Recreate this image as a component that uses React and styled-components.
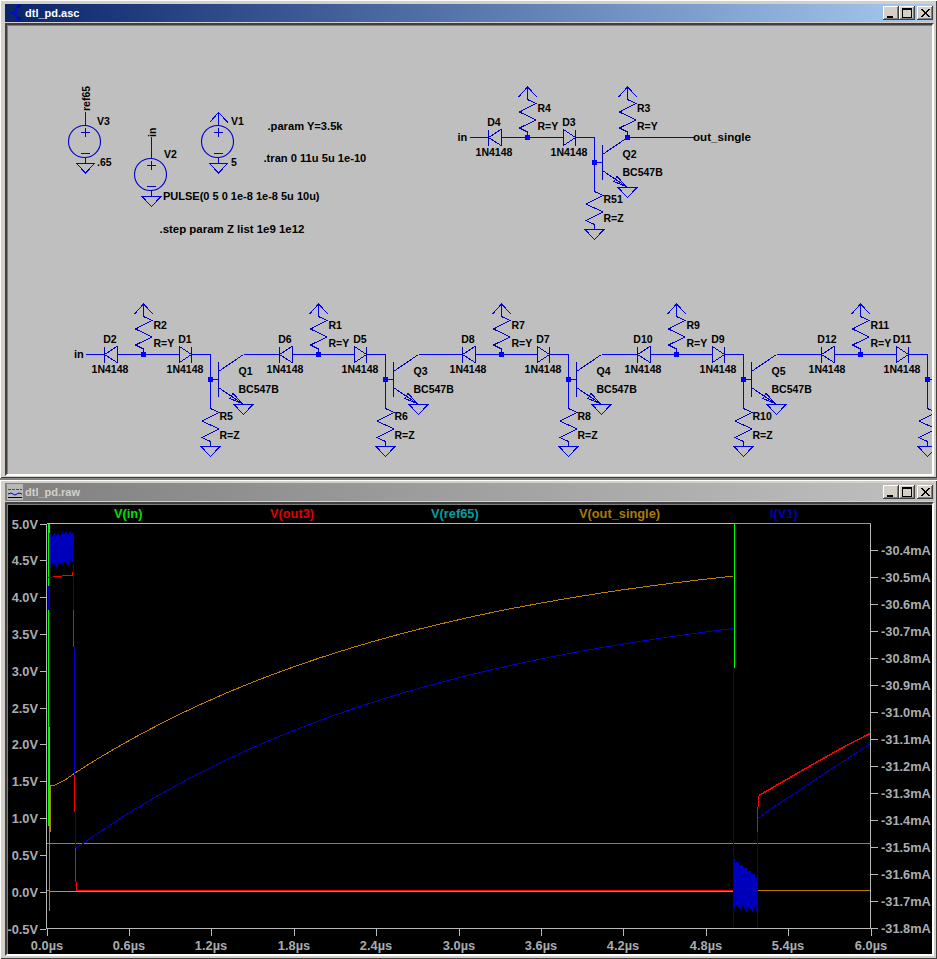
import React from 'react';
import styled, { createGlobalStyle } from 'styled-components';

const Global = createGlobalStyle`
  html, body { margin: 0; padding: 0; background: #808080; }
  #root { width: 937px; height: 959px; overflow: hidden; }
`;

const Desktop = styled.div`
  width: 937px;
  height: 959px;
  display: flex;
  flex-direction: column;
  gap: 2px;
  background: #808080;
`;

const Window = styled.section`
  box-sizing: border-box;
  width: 937px;
  padding: ${p => p.$top}px 3px ${p => p.$bottom}px 5px;
  display: flex;
  flex-direction: column;
  gap: 1px;
  background: #d4d0c8;
  box-shadow: inset 1px 1px 0 #ffffff, inset -1px -1px 0 #404040;
`;

const TitleBar = styled.header`
  height: 18px;
  display: flex;
  align-items: center;
  padding: 0 1px 0 2px;
  background: linear-gradient(90deg, ${p => (p.$active ? '#0a246a, #a6caf0' : '#808080, #c0c0c0')});
`;

const TitleText = styled.h1`
  margin: 0;
  flex: 1;
  font: bold 11px "Liberation Sans", Arial, sans-serif;
  color: ${p => (p.$active ? '#ffffff' : '#d4d0c8')};
`;

const CaptionButton = styled.button`
  width: 16px;
  height: 14px;
  margin-left: ${p => p.$gap || 0}px;
  padding: 0;
  border: 0;
  display: flex;
  background: #d4d0c8;
  box-shadow: inset -1px -1px 0 #404040, inset 1px 1px 0 #ffffff, inset -2px -2px 0 #808080;
`;

const Sunken = styled.div`
  display: block;
  height: ${p => p.$h}px;
  border: 2px solid;
  border-color: #404040 #ffffff #ffffff #404040;
  box-shadow: inset 1px 1px 0 #808080;
  background: ${p => p.$bg};
`;

const Drawing = styled.svg`
  display: block;
  width: 925px;
  height: ${p => p.$h}px;
  shape-rendering: crispEdges;
`;

const Part = styled.text`
  font: bold 10.5px "Liberation Sans", Arial, sans-serif;
  fill: #000000;
`;

const Note = styled(Part)`
  font-size: ${p => p.$size || 11}px;
`;

const AxisText = styled.text`
  font: bold 12.8px "Liberation Sans", Arial, sans-serif;
  fill: ${p => p.$c || '#a9adb0'};
`;

const Wire = styled.path`
  fill: none;
  stroke: #0000ff;
  stroke-width: 1;
`;

const Sym = styled.path`
  fill: none;
  stroke: #0000c8;
  stroke-width: 1;
`;

const Power = styled.path`
  fill: none;
  stroke: #0000f0;
  stroke-width: 1;
`;

const Ring = styled.circle`
  fill: none;
  stroke: #0000c8;
  stroke-width: 1.1;
  shape-rendering: auto;
`;

const Node = styled.rect`
  fill: #0000ff;
  width: 5px;
  height: 5px;
`;

const Trace = styled.path`
  fill: none;
  stroke: ${p => p.$c};
  stroke-width: ${p => p.$w || 1};
`;

const Axis = styled.path`
  fill: none;
  stroke: #b8b8b8;
  stroke-width: 1;
`;

const Ground = ({ x, y }) => <Power d={`M${x - 9.5} ${y}H${x + 9.5}L${x} ${y + 10}Z`} />;
const Arrow = ({ x, y }) => <Power d={`M${x - 9} ${y + 10}L${x} ${y}L${x + 9.5} ${y + 10}M${x} ${y}V${y + 13}`} />;

const PullUp = ({ x, bottom = 354.5 }) => (
  <>
    <Arrow x={x} y={304} />
    <Sym d={`M${x} 316.5L${x + 8.5} 320.5L${x - 8} 329L${x + 8.5} 337L${x - 8} 345L${x} 349V${bottom}`} />
  </>
);

const DiodeLeft = ({ x }) => <Sym d={`M${x} 346.5V362.5M${x} 354.5L${x + 12.5} 346.5V362.5Z`} />;
const DiodeRight = ({ x }) => <Sym d={`M${x + 12} 346.5V362.5M${x + 12} 354.5L${x} 346.5V362.5Z`} />;

const Center = styled(Part)`
  text-anchor: middle;
`;

const Stage = ({ dx, dy = 0, d1, d2, r1, r2, q, input, collectorTo }) => (
  <g transform={`translate(${dx} ${dy})`}>
    {input && <Wire d="M85.5 354.5H104.5" />}
    <Wire d="M117.5 354.5H179.5M191.5 354.5H210.5V408.5M210.5 379.5H218.5" />
    <DiodeLeft x={104.5} />
    <DiodeRight x={179.5} />
    <PullUp x={143.5} />
    <Node x={141} y={352} />
    <Node x={208} y={377} />
    <Sym d="M218.5 362V397M218.5 371.5L243.5 354.5M218.5 387.5L243.5 404.5M243 404L233 393.5L230 398.5L243 404" />
    {collectorTo && <Wire d={`M243.5 354.5H${collectorTo}`} />}
    <Ground x={243.5} y={404.5} />
    <Sym d="M210.5 408.5L219 412.5L202 421L219 429L202 437.5L210.5 441.5V446" />
    <Ground x={210.5} y={446.5} />
    <Center x={110} y={343}>{d1}</Center>
    <Center x={110} y={373}>1N4148</Center>
    <Center x={185} y={343}>{d2}</Center>
    <Center x={185} y={373}>1N4148</Center>
    <Part x={153.5} y={329}>{r1}</Part>
    <Part x={153.5} y={347}>R=Y</Part>
    {q && (
      <>
        <Part x={219.5} y={420}>{r2}</Part>
        <Part x={219.5} y={439}>R=Z</Part>
        <Part x={238.5} y={375}>{q}</Part>
        <Part x={238.5} y={393}>BC547B</Part>
      </>
    )}
  </g>
);

const Source = ({ x, cy, gnd }) => (
  <>
    <Ring cx={x - 1} cy={cy} r={16} />
    <Sym d={`M${x - 4.5} ${cy - 9.5}H${x + 4.5}M${x} ${cy - 13.5}V${cy - 5}M${x - 4.5} ${cy + 11.5}H${x + 4.5}M${x} ${cy + 16}V${gnd}`} />
    <Ground x={x} y={gnd} />
  </>
);

const stages = [
  { dx: 0, d1: 'D2', d2: 'D1', r1: 'R2', r2: 'R5', q: 'Q1', input: true },
  { dx: 175, d1: 'D6', d2: 'D5', r1: 'R1', r2: 'R6', q: 'Q3' },
  { dx: 358, d1: 'D8', d2: 'D7', r1: 'R7', r2: 'R8', q: 'Q4' },
  { dx: 533, d1: 'D10', d2: 'D9', r1: 'R9', r2: 'R10', q: 'Q5' },
  { dx: 717, d1: 'D12', d2: 'D11', r1: 'R11', r2: '', q: '' },
];

const Schematic = () => (
  <Drawing viewBox="7 25 925 449" $h={449}>
    <Source x={85.5} cy={141.5} gnd={163} />
    <Wire d="M85.5 112V126" />
    <Part transform="translate(89.5 111) rotate(-90)">ref65</Part>
    <Part x={97} y={125}>V3</Part>
    <Part x={97} y={166}>.65</Part>

    <Source x={151.5} cy={174.5} gnd={196.5} />
    <Wire d="M151.5 137V158" />
    <Part transform="translate(155.5 137) rotate(-90)">in</Part>
    <Part x={164} y={158}>V2</Part>
    <Note x={163} y={200}>PULSE(0 5 0 1e-8 1e-8 5u 10u)</Note>

    <Source x={218.5} cy={141.5} gnd={163} />
    <Power d="M209.5 122.5L218.5 112.5L228 122.5M218.5 112.5V126" />
    <Part x={231} y={125}>V1</Part>
    <Part x={231} y={166}>5</Part>

    <Note x={267.5} y={129.5} $size={11.15}>.param Y=3.5k</Note>
    <Note x={263.5} y={162} $size={11.15}>.tran 0 11u 5u 1e-10</Note>
    <Note x={159.5} y={233} $size={11.45}>.step param Z list 1e9 1e12</Note>

    <Note x={457.5} y={141}>in</Note>
    <Stage dx={384} dy={-217} d1="D4" d2="D3" r1="R4" r2="R51" q="Q2" input />
    <g transform="translate(484 -217)">
      <PullUp x={143.5} />
      <Node x={141} y={352} />
      <Wire d="M143.5 354.5H209.5" />
      <Part x={153} y={329}>R3</Part>
      <Part x={153} y={347}>R=Y</Part>
    </g>
    <Note x={693} y={141} $size={11.6}>out_single</Note>

    <Note x={74} y={358}>in</Note>
    {stages.map((s, i) => (
      <Stage key={s.d1} {...s} collectorTo={stages[i + 1] ? stages[i + 1].dx - s.dx + 104.5 : undefined} />
    ))}
  </Drawing>
);

const line = pts => 'M' + pts.map(p => `${p[0]} ${p[1]}`).join('L');

const charge = (x0, x1, a, b, tau) => {
  const pts = [];
  const at = x => [x, Math.round((a + b * Math.exp(-(x - x0) / tau)) * 10) / 10];
  for (let x = x0; x < x1; x += 5) pts.push(at(x));
  pts.push(at(x1));
  return pts;
};

const orange = [[50.5, 785.5], [55, 785], [65, 780], ...charge(75, 733, 537, 236, 366)];
const blue = charge(76, 733, 584, 264.4, 369);

const ringing = (x0, x1, t0, t1, b0, b1, solid) => {
  let d = '';
  const n = x1 - x0;
  for (let i = 0; i <= n; i++) {
    const f = i / n;
    const x = x0 + i + 0.5;
    const top = Math.round(t0 + (t1 - t0) * f + ((i * 7) % 4));
    const bottom = Math.round(b0 + (b1 - b0) * f - ((i * 5) % 6));
    const end = i % 2 === 0 ? bottom : solid + ((i * 3) % 5);
    d += `M${x} ${top}V${end}`;
  }
  return d;
};

const yTicks = ['5.0V', '4.5V', '4.0V', '3.5V', '3.0V', '2.5V', '2.0V', '1.5V', '1.0V', '0.5V', '0.0V', '-0.5V'];
const iTicks = ['-30.4mA', '-30.5mA', '-30.6mA', '-30.7mA', '-30.8mA', '-30.9mA', '-31.0mA', '-31.1mA', '-31.2mA', '-31.3mA', '-31.4mA', '-31.5mA', '-31.6mA', '-31.7mA', '-31.8mA'];
const xTicks = ['0.0µs', '0.6µs', '1.2µs', '1.8µs', '2.4µs', '3.0µs', '3.6µs', '4.2µs', '4.8µs', '5.4µs', '6.0µs'];

const EndText = styled(AxisText)`
  text-anchor: end;
`;
const MidText = styled(AxisText)`
  text-anchor: middle;
`;

const Plot = () => (
  <Drawing viewBox="7 504 925 450" $h={450}>
    <Axis d="M46.5 523.5V928.5H870.5V523.5M46.5 523.5H734" />
    <Trace $c="#00ff00" d="M734 523.5H870.5" />
    {yTicks.map((t, i) => {
      const y = Math.round(523.5 + i * 36.82) + 0.5;
      return (
        <g key={t}>
          <Axis d={`M40 ${y}H46`} />
          <EndText x={38} y={y + 4.5}>{t}</EndText>
        </g>
      );
    })}
    {iTicks.map((t, i) => {
      const y = Math.round(550 + i * 27.03) + 0.5;
      return (
        <g key={t}>
          <Axis d={`M871 ${y}H877.5`} />
          <AxisText x={881} y={y + 4.5}>{t}</AxisText>
        </g>
      );
    })}
    {xTicks.map((t, i) => {
      const x = Math.round(46.5 + i * 82.4) + 0.5;
      return (
        <g key={t}>
          <Axis d={`M${x} 929V936`} />
          <MidText x={x - 0.5} y={949.5}>{t}</MidText>
        </g>
      );
    })}

    <AxisText x={114} y={518} $c="#00e000">V(in)</AxisText>
    <AxisText x={270} y={518} $c="#e00000">V(out3)</AxisText>
    <AxisText x={431} y={518} $c="#00a0a0">V(ref65)</AxisText>
    <AxisText x={579} y={518} $c="#a87c00">V(out_single)</AxisText>
    <AxisText x={770} y={518} $c="#0000b8">I(V1)</AxisText>

    <Trace $c="#00b8b8" d="M47 843.5H870" />
    <Trace $c="#00ff00" $w={2} d="M48.5 524V826" />
    <Trace $c="#40c000" d="M49.5 826V836" />
    <Trace $c="#00ff00" d="M50 891.5H733.5M734.5 524V668" />
    <Trace $c="#bf8000" d="M50.5 785.5V832M49.5 832V911M47 890.5H50M758 890.5H870" />
    <Trace $c="#bf8000" d={line(orange)} />
    <Trace $c="#0000c8" d={line(blue)} />

    <Trace $c="#0000bc" d={ringing(50, 73, 534, 531, 568, 564, 543)} />
    <Trace $c="#0000c8" d="M48.5 586V610M49.5 533V610M49.5 610V727M73.5 564V610M74.5 647V775M75.5 812V848" />
    <Trace $c="#0000c8" d="M47 577.5H53" />
    <Trace $c="#ff0000" d="M53 576.5H62M62 575.5H72M72.5 575.5V572" />
    <Trace $c="#ff0000" d="M73.5 610V647M74.5 775V812M75.5 848V882M76.5 882V890" />
    <Trace $c="#ff0000" $w={1.5} d="M76 890.25H733" />

    <Trace $c="#0000bc" d={ringing(734, 757, 859, 876, 909, 913, 889)} />
    <Trace $c="#00009c" d="M733.5 668V927M757.5 832V928" />
    <Trace $c="#ff0000" d="M757.5 807V832M758.5 796V807" />
    <Trace $c="#ff0000" $w={1.5} d={line([[759, 795.5], [803, 770], [840, 749], [870, 733.5]])} />
    <Trace $c="#0000c8" d={line([[758.5, 818], [765, 813], [830, 770], [870, 744]])} />
  </Drawing>
);

const LtIcon = () => (
  <svg width="18" height="18" viewBox="0 0 18 18">
    <path d="M12 0L9 4V7L5 9L9 11V14L13 17" fill="none" stroke="#0000ff" strokeWidth="1.3" />
    <path d="M14 1L11 4M11 13L14 15" fill="none" stroke="#000040" strokeWidth="1" />
  </svg>
);

const WaveIcon = () => (
  <svg width="18" height="16" viewBox="0 0 18 16">
    <rect x="0" y="0" width="16" height="16" fill="#b8b8b8" />
    <path d="M1 5.5H15" stroke="#ff0000" strokeDasharray="3 1" fill="none" />
    <path d="M1 10L4 9L8 11L12 9L15 10" stroke="#0000c0" fill="none" />
    <path d="M1 13.5H15" stroke="#000" fill="none" />
  </svg>
);

const Glyph = ({ d, w = 1 }) => (
  <svg width="16" height="14" viewBox="0 0 16 14">
    <path d={d} fill="none" stroke="#000" strokeWidth={w} shapeRendering="crispEdges" />
  </svg>
);

const Caption = () => (
  <>
    <CaptionButton aria-label="minimize"><Glyph d="M4 10.5H10" w={2} /></CaptionButton>
    <CaptionButton aria-label="maximize"><Glyph d="M3.5 2.5H12.5V11.5H3.5ZM3.5 3.5H12.5" /></CaptionButton>
    <CaptionButton aria-label="close" $gap={2}><Glyph d="M4 3L12 11M5 3L13 11M12 3L4 11M13 3L5 11" /></CaptionButton>
  </>
);

export default function App() {
  return (
    <Desktop>
      <Global />
      <Window $top={4} $bottom={2}>
        <TitleBar $active>
          <LtIcon />
          <TitleText $active>dtl_pd.asc</TitleText>
          <Caption />
        </TitleBar>
        <Sunken $h={449} $bg="#bfbfbf"><Schematic /></Sunken>
      </Window>
      <Window $top={3} $bottom={3}>
        <TitleBar>
          <WaveIcon />
          <TitleText>dtl_pd.raw</TitleText>
          <Caption />
        </TitleBar>
        <Sunken $h={450} $bg="#000000"><Plot /></Sunken>
      </Window>
    </Desktop>
  );
}
